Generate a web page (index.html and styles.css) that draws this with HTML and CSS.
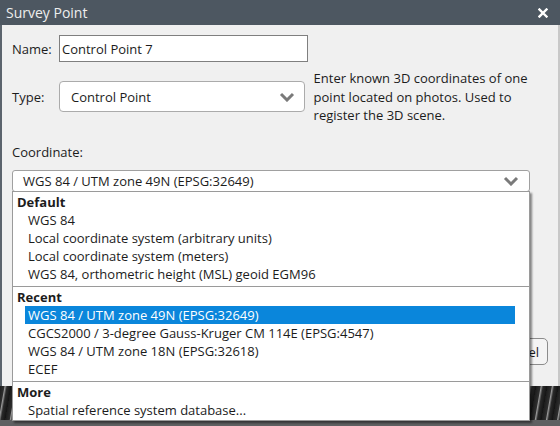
FILE: index.html
```html
<!DOCTYPE html>
<html lang="en">
<head>
    <meta charset="UTF-8">
    <meta name="viewport" content="width=device-width, initial-scale=1.0">
    <title>Survey Point</title>
    <link rel="stylesheet" href="styles.css">
</head>
<body>
    <div class="screen">
        <div class="dialog">
            <div class="titlebar">
                <span class="title">Survey Point</span>
                <span class="close">
                    <svg width="10" height="10" viewBox="0 0 10 10">
                        <path d="M1.5 1.5 L8.5 8.5 M8.5 1.5 L1.5 8.5" stroke="#fff" stroke-width="2.4" stroke-linecap="square"/>
                    </svg>
                </span>
            </div>
            <div class="dialog-body">
                <div class="row name-row">
                    <label for="name">Name:</label>
                    <input type="text" id="name" class="textbox" value="Control Point 7">
                </div>
                <div class="row type-row">
                    <label>Type:</label>
                    <div class="dropdown type-dropdown">
                        <span>Control Point</span>
                        <svg class="chevron" width="16" height="10" viewBox="0 0 16 10">
                            <path d="M2 2 L8 8 L14 2" fill="none" stroke="#7a7a7a" stroke-width="3"/>
                        </svg>
                    </div>
                    <p class="hint">Enter known 3D coordinates of one point located on photos. Used to register the 3D scene.</p>
                </div>
                <div class="coord-label">Coordinate:</div>
                <div class="coord-field">
                    <div class="dropdown coord-dropdown">
                        <span>WGS 84 / UTM zone 49N (EPSG:32649)</span>
                        <svg class="chevron" width="16" height="10" viewBox="0 0 16 10">
                            <path d="M2 2 L8 8 L14 2" fill="none" stroke="#7a7a7a" stroke-width="3"/>
                        </svg>
                    </div>
                    <div class="popup">
                        <div class="group-title">Default</div>
                        <div class="item">WGS 84</div>
                        <div class="item">Local coordinate system (arbitrary units)</div>
                        <div class="item">Local coordinate system (meters)</div>
                        <div class="item">WGS 84, orthometric height (MSL) geoid EGM96</div>
                        <div class="separator"></div>
                        <div class="group-title">Recent</div>
                        <div class="item selected">WGS 84 / UTM zone 49N (EPSG:32649)</div>
                        <div class="item">CGCS2000 / 3-degree Gauss-Kruger CM 114E (EPSG:4547)</div>
                        <div class="item">WGS 84 / UTM zone 18N (EPSG:32618)</div>
                        <div class="item">ECEF</div>
                        <div class="separator"></div>
                        <div class="group-title">More</div>
                        <div class="item">Spatial reference system database...</div>
                    </div>
                </div>
                <div class="buttons">
                    <button class="btn">OK</button>
                    <button class="btn">Cancel</button>
                </div>
            </div>
        </div>
        <div class="photo"></div>
    </div>
    <div class="statusbar"></div>
</body>
</html>
```

FILE: styles.css
```css
body {
    margin: 0;
    padding: 0;
    font-family: "Open Sans", "Noto Sans", sans-serif;
    font-size: 13px;
    color: #1c1c1c;
    background: #5f6062;
}
.screen {
    height: 420px;
    display: flex;
    flex-direction: column;
}
.dialog {
    height: 386px;
    display: flex;
    flex-direction: column;
    background: #f0f0f0;
    border-left: 2px solid #5b646d;
    border-right: 2px solid #c8c8c8;
}
.titlebar {
    height: 25px;
    flex-shrink: 0;
    background: #4d5761;
    color: #eeeeee;
    display: flex;
    align-items: center;
    justify-content: space-between;
    padding: 0 12px 0 6px;
    margin: 0 -2px;
}
.title {
    font-size: 14px;
    margin-top: -1px;
}
.close {
    display: flex;
}
.dialog-body {
    flex: 1;
    display: flex;
    flex-direction: column;
    padding: 10px 10px 21px 10px;
}
.row {
    display: flex;
    align-items: center;
}
.row label {
    width: 47px;
    flex-shrink: 0;
}
.textbox {
    width: 249px;
    height: 27px;
    box-sizing: border-box;
    border: 1px solid #7f7f7f;
    padding: 0 2px;
    font: inherit;
    color: #1c1c1c;
    background: white;
}
.type-row {
    margin-top: 7px;
}
.dropdown {
    display: flex;
    align-items: center;
    justify-content: space-between;
    box-sizing: border-box;
    background: white;
    border: 1px solid #ababab;
}
.type-dropdown {
    width: 249px;
    height: 31px;
    border-radius: 4px;
    padding: 0 9px 0 11px;
}
.hint {
    margin: 0 0 0 9px;
    width: 238px;
    line-height: 18.5px;
}
.coord-label {
    margin-top: 18px;
    line-height: 18px;
}
.coord-field {
    position: relative;
    margin-top: 9px;
    width: 518px;
}
.coord-dropdown {
    height: 22px;
    border-radius: 3px;
    padding: 0 10px;
    border-color: #a0a0a0;
}
.popup {
    position: absolute;
    top: 21px;
    left: 0;
    width: 518px;
    box-sizing: border-box;
    background: white;
    border: 1px solid #9a9a9a;
    box-shadow: 2px 2px 2px rgba(0, 0, 0, 0.45);
    padding: 1px 0;
}
.group-title {
    font-weight: bold;
    line-height: 18px;
    padding-left: 4px;
}
.item {
    line-height: 18px;
    margin: 0 14px 0 12px;
    padding-left: 3px;
    white-space: nowrap;
}
.item.selected {
    background: #0a86db;
    color: white;
}
.separator {
    height: 1px;
    background: #9a9a9a;
    margin: 3px 0 1px;
}
.buttons {
    margin-top: auto;
    display: flex;
    justify-content: flex-end;
    gap: 8px;
}
.btn {
    width: 58px;
    height: 27px;
    font: inherit;
    color: #1c1c1c;
    background: #f4f4f4;
    border: 1px solid #8c8c8c;
    border-radius: 5px;
}
.photo {
    flex: 1;
    background: repeating-linear-gradient(100deg, #1c1c1c 0px, #2e2e2e 4px, #9a9a9a 5px, #2a2a2a 7px, #141414 11px);
}
.statusbar {
    height: 6px;
    background: #5f6062;
}
```
